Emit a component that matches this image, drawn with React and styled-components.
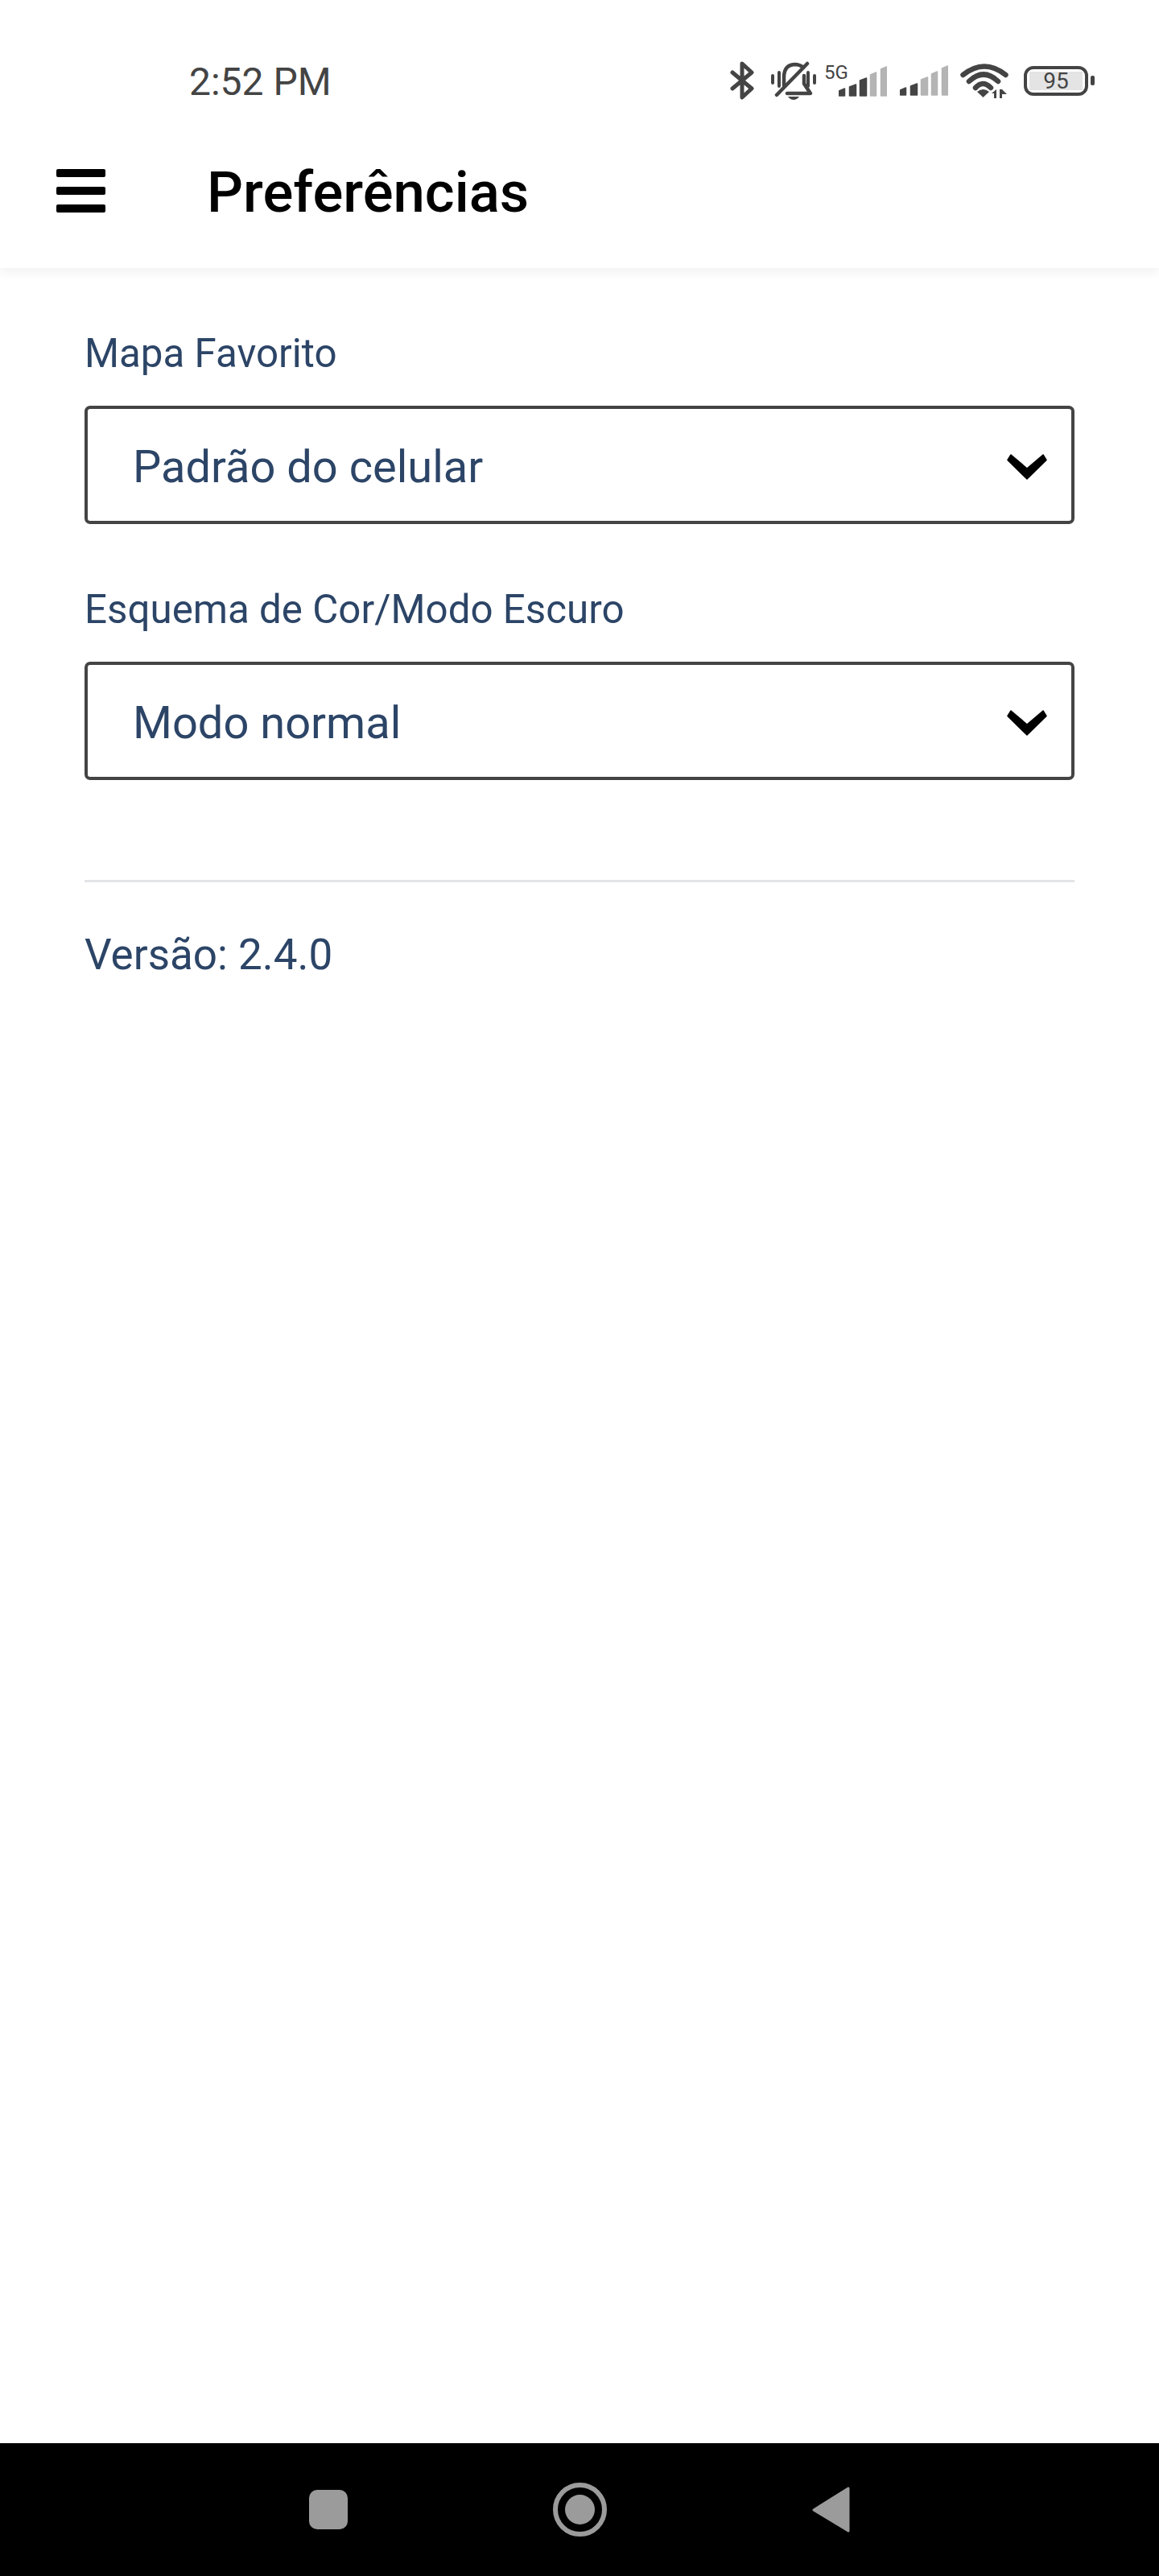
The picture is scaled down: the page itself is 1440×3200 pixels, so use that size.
import React from "react"
import styled, { createGlobalStyle } from "styled-components"

const GlobalStyle = createGlobalStyle`
	* {
		box-sizing: border-box;
	}
	body {
		margin: 0;
		background: #fff;
		font-family: Roboto, "Liberation Sans", sans-serif;
	}
`

const Signal = ({ level }) => {
	const bars = [
		[0.5, 7.5, 27],
		[13.5, 21.5, 22],
		[26.5, 34.5, 14],
		[39.5, 46.5, 7],
		[52.5, 59.5, 0],
	]
	return (
		<SignalIcon viewBox="0 0 60 38">
			{bars.map(([x1, x2, top], i) => (
				<path
					key={i}
					d={`M${x1} ${top + 4}L${x2} ${top + 1}V37H${x1}Z`}
					fill={i < level ? "#444" : "#b4b4b4"}
					stroke={i < level ? "#444" : "#b4b4b4"}
					strokeWidth="1.5"
					strokeLinejoin="round"
				/>
			))}
		</SignalIcon>
	)
}

const Chevron = () => (
	<ChevronIcon viewBox="0 0 50 32">
		<polygon points="5,1 1,7.5 25,31 49,7.5 45,1 25,18" fill="#000" stroke="#000" strokeWidth="1.5" strokeLinejoin="round" />
	</ChevronIcon>
)

const Dropdown = ({ label, value }) => (
	<Field>
		<Label>{label}</Label>
		<SelectBox>
			<SelectValue>{value}</SelectValue>
			<Chevron />
		</SelectBox>
	</Field>
)

const App = () => {
	return (
		<Page>
			<GlobalStyle />
			<Header>
				<StatusBar>
					<Time>2:52 PM</Time>
					<StatusIcons>
						<BluetoothIcon viewBox="0 0 31 48">
							<polyline points="3,14 27,34 15,45 15,3 27,14 3,34" fill="none" stroke="#444" strokeWidth="5" strokeLinecap="round" strokeLinejoin="round" />
						</BluetoothIcon>
						<BellIcon viewBox="0 0 56 48">
							<g fill="none" stroke="#444" strokeWidth="4" strokeLinecap="round" strokeLinejoin="round">
								<path d="M2 18V27M10 14V31M46 14V31M54 18V27" />
								<path d="M16 30V20Q16 5 29 4Q36 4 40 8" strokeWidth="4.5" />
								<path d="M41 18V28L49 40H20" strokeWidth="4.5" />
								<path d="M7 42L45 3" strokeWidth="4.5" />
							</g>
							<path d="M21 44H35Q32 48 28 48Q24 48 21 44Z" fill="#444" />
						</BellIcon>
						<SignalGroup>
							<NetworkType>5G</NetworkType>
							<Signal level={3} />
						</SignalGroup>
						<Signal level={2} />
						<WifiIcon viewBox="0 0 60 43">
							<g fill="none" stroke="#444" strokeWidth="6.5" strokeLinecap="round">
								<path d="M3.5 14Q30 -7 56.5 14" />
								<path d="M11 22Q29 5 47 22" />
								<path d="M19 30Q28 20 38 30" />
							</g>
							<path d="M21 35L28.5 42L36 35Q28.5 29 21 35Z" fill="#444" />
							<path d="M39 37L45 32V43H42V37ZM49 43V32H52L58 38H52V43Z" fill="#444" />
						</WifiIcon>
						<Battery>
							<BatteryBody>
								<BatteryLevel>95</BatteryLevel>
							</BatteryBody>
							<BatteryNub />
						</Battery>
					</StatusIcons>
				</StatusBar>
				<Toolbar>
					<MenuButton>
						<MenuBar />
						<MenuBar />
						<MenuBar />
					</MenuButton>
					<Title>Preferências</Title>
				</Toolbar>
			</Header>
			<Content>
				<Dropdown label="Mapa Favorito" value="Padrão do celular" />
				<Dropdown label="Esquema de Cor/Modo Escuro" value="Modo normal" />
				<Divider />
				<Version>Versão: 2.4.0</Version>
			</Content>
			<NavBar>
				<NavSquare />
				<NavCircle>
					<NavDot />
				</NavCircle>
				<NavBack viewBox="0 0 47 57">
					<path d="M45 2V55L2 29Z" fill="#9b9b9b" stroke="#9b9b9b" strokeWidth="3" strokeLinejoin="round" />
				</NavBack>
			</NavBar>
		</Page>
	)
}

const Page = styled.div`
	display: flex;
	flex-direction: column;
	min-height: 3200px;
	background: #fff;
`

const Header = styled.header`
	height: 333px;
	padding-top: 60px;
	background: #fff;
	box-shadow: 0 6px 12px rgba(0, 0, 0, 0.05);
`

const StatusBar = styled.div`
	display: flex;
	align-items: center;
	justify-content: space-between;
	height: 80px;
	padding: 0 80px 0 235px;
`

const Time = styled.span`
	padding-top: 4px;
	font-size: 48px;
	line-height: 80px;
	color: #444;
`

const StatusIcons = styled.div`
	display: flex;
	align-items: center;
`

const BluetoothIcon = styled.svg`
	width: 31px;
	height: 48px;
	margin-right: 20px;
`

const BellIcon = styled.svg`
	width: 56px;
	height: 48px;
	margin-right: 45px;
`

const SignalGroup = styled.div`
	display: flex;
	align-items: flex-end;
	margin-left: -17px;
	margin-right: 16px;
	position: relative;
	height: 40px;
`

const NetworkType = styled.span`
	position: absolute;
	left: -18px;
	top: -2px;
	font-size: 24px;
	line-height: 24px;
	color: #444;
`

const SignalIcon = styled.svg`
	width: 60px;
	height: 38px;
	flex: none;
`

const WifiIcon = styled.svg`
	width: 60px;
	height: 43px;
	margin-left: 15px;
	margin-right: 19px;
`

const Battery = styled.div`
	display: flex;
	align-items: center;
	gap: 3px;
`

const BatteryBody = styled.div`
	width: 80px;
	height: 37px;
	padding: 3px;
	border: 4px solid #444;
	border-radius: 12px;
`

const BatteryLevel = styled.div`
	height: 100%;
	background: #e4e4e4;
	font-size: 28px;
	line-height: 23px;
	text-align: center;
	color: #444;
`

const BatteryNub = styled.div`
	width: 5px;
	height: 12px;
	border-radius: 2px;
	background: #444;
`

const Toolbar = styled.div`
	display: flex;
	align-items: center;
	height: 193px;
	padding-left: 70px;
`

const MenuButton = styled.div`
	display: flex;
	flex-direction: column;
	justify-content: space-between;
	width: 61px;
	height: 54px;
	margin-right: 126px;
`

const MenuBar = styled.div`
	height: 10px;
	border-radius: 2px;
	background: #000;
`

const Title = styled.h1`
	margin: 0;
	padding-top: 4px;
	font-size: 70.7px;
	font-weight: 500;
	line-height: 80px;
	color: #000;
`

const Content = styled.main`
	padding: 78px 105px 0;
`

const Field = styled.div`
	margin-bottom: 78px;
`

const Label = styled.div`
	margin-bottom: 37px;
	font-size: 49.3px;
	line-height: 56px;
	color: #2c4567;
`

const SelectBox = styled.div`
	display: flex;
	align-items: center;
	justify-content: space-between;
	height: 147px;
	padding: 4px 30px 0 56px;
	border: 4px solid #444;
	border-radius: 7px;
`

const SelectValue = styled.span`
	font-size: 56px;
	line-height: 64px;
	color: #2c4567;
`

const ChevronIcon = styled.svg`
	width: 50px;
	height: 32px;
`

const Divider = styled.hr`
	height: 3px;
	margin: 124px 0 0;
	border: 0;
	background: #e2e4e8;
`

const Version = styled.div`
	margin-top: 60px;
	font-size: 53px;
	line-height: 60px;
	color: #2c4567;
`

const NavBar = styled.nav`
	display: flex;
	align-items: center;
	justify-content: center;
	gap: 255px;
	height: 165px;
	margin-top: auto;
	background: #000;
`

const NavSquare = styled.div`
	width: 48px;
	height: 49px;
	border-radius: 10px;
	background: #9b9b9b;
`

const NavCircle = styled.div`
	display: flex;
	align-items: center;
	justify-content: center;
	width: 67px;
	height: 67px;
	border: 6px solid #9b9b9b;
	border-radius: 50%;
`

const NavDot = styled.div`
	width: 37px;
	height: 37px;
	border-radius: 50%;
	background: #9b9b9b;
`

const NavBack = styled.svg`
	width: 47px;
	height: 57px;
`

export default App
